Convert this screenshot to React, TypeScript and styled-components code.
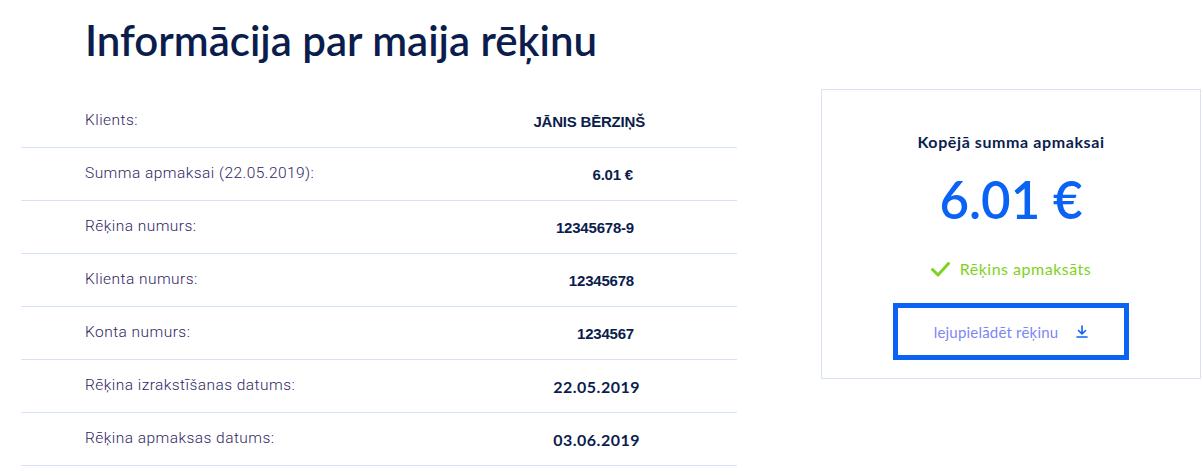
import styled, { createGlobalStyle } from 'styled-components'

const GlobalStyle = createGlobalStyle`
  body {
    margin: 0;
    background: #ffffff;
    font-family: 'Lato', 'Open Sans', sans-serif;
  }
`

const colors = {
  navy: '#0b1d4d',
  label: '#2f2563',
  line: '#d6e2f8',
  blue: '#0a63f5',
  green: '#7ed321',
  link: '#7d86f3',
}

interface Row {
  label: string
  value: string
  shift?: number
  wide?: boolean
}

const rows: Row[] = [
  { label: 'Klients:', value: 'JĀNIS BĒRZIŅŠ', shift: -11 },
  { label: 'Summa apmaksai (22.05.2019):', value: '6.01 €', shift: 1 },
  { label: 'Rēķina numurs:', value: '12345678-9' },
  { label: 'Klienta numurs:', value: '12345678' },
  { label: 'Konta numurs:', value: '1234567' },
  { label: 'Rēķina izrakstīšanas datums:', value: '22.05.2019', shift: -6, wide: true },
  { label: 'Rēķina apmaksas datums:', value: '03.06.2019', shift: -6, wide: true },
]

function App() {
  return (
    <>
      <GlobalStyle />
      <Page>
        <Left>
          <Title>Informācija par maija rēķinu</Title>
          <Table>
            {rows.map((row) => (
              <TableRow key={row.label}>
                <Label>{row.label}</Label>
                <Value $shift={row.shift ?? 0} $wide={!!row.wide}>
                  {row.value}
                </Value>
              </TableRow>
            ))}
          </Table>
        </Left>
        <Card>
          <CardTitle>Kopējā summa apmaksai</CardTitle>
          <Amount>6.01 €</Amount>
          <Status>
            <svg width="19" height="15" viewBox="0 0 19 15" fill="none">
              <path d="M1.5 7.5 L7 13 L17.5 1.5" stroke={colors.green} strokeWidth="3" strokeLinecap="round" strokeLinejoin="round" />
            </svg>
            Rēķins apmaksāts
          </Status>
          <DownloadButton>
            lejupielādēt rēķinu
            <svg width="12" height="13" viewBox="0 0 12 13" fill="none">
              <path d="M6 1 V9 M2.5 5.5 L6 9 L9.5 5.5 M1 12 H11" stroke={colors.blue} strokeWidth="1.6" strokeLinecap="round" strokeLinejoin="round" />
            </svg>
          </DownloadButton>
        </Card>
      </Page>
    </>
  )
}

const Page = styled.div`
  display: grid;
  grid-template-columns: 716px 380px;
  column-gap: 84px;
  padding-left: 21px;
  align-items: start;
`

const Left = styled.div`
  display: flex;
  flex-direction: column;
`

const Title = styled.h1`
  margin: 0;
  padding: 14px 0 0 64px;
  height: 80px;
  box-sizing: border-box;
  font-family: 'Lato', sans-serif;
  font-weight: 600;
  font-size: 42px;
  line-height: 52px;
  color: ${colors.navy};
`

const Table = styled.div`
  display: flex;
  flex-direction: column;
  margin-top: 15px;
`

const TableRow = styled.div`
  display: flex;
  align-items: center;
  justify-content: space-between;
  height: 53px;
  box-sizing: border-box;
  padding: 0 103px 0 64px;
  border-bottom: 1px solid ${colors.line};
`

const Label = styled.span`
  margin-top: -3px;
  font-family: 'Roboto', sans-serif;
  font-weight: 300;
  font-size: 15.5px;
  letter-spacing: 0.45px;
  color: ${colors.label};
`

const Value = styled.span<{ $shift: number; $wide: boolean }>`
  margin-right: ${({ $shift }) => $shift}px;
  font-family: ${({ $wide }) => ($wide ? "'Lato', sans-serif" : "'Liberation Sans', Arial, sans-serif")};
  font-weight: 700;
  font-size: ${({ $wide }) => ($wide ? '16px' : '15px')};
  letter-spacing: ${({ $wide }) => ($wide ? '0.5px' : '-0.2px')};
  color: ${colors.navy};
`

const Card = styled.div`
  margin-top: 89px;
  height: 290px;
  box-sizing: border-box;
  border: 1px solid ${colors.line};
  display: flex;
  flex-direction: column;
  align-items: center;
  padding-top: 42px;
`

const CardTitle = styled.div`
  font-family: 'Lato', sans-serif;
  font-weight: 700;
  font-size: 16px;
  letter-spacing: 0.6px;
  line-height: 20px;
  color: ${colors.navy};
`

const Amount = styled.div`
  margin-top: 18px;
  font-family: 'Lato', sans-serif;
  font-weight: 600;
  font-size: 51px;
  line-height: 60px;
  color: ${colors.blue};
`

const Status = styled.div`
  margin-top: 29px;
  display: flex;
  align-items: center;
  gap: 10px;
  font-family: 'Lato', sans-serif;
  font-size: 16px;
  letter-spacing: 0.5px;
  line-height: 20px;
  color: ${colors.green};
`

const DownloadButton = styled.div`
  margin-top: 24px;
  width: 236px;
  height: 57px;
  box-sizing: border-box;
  border: 5px solid ${colors.blue};
  display: flex;
  align-items: center;
  justify-content: center;
  gap: 18px;
  font-family: 'Lato', sans-serif;
  font-size: 15px;
  letter-spacing: 0.2px;
  color: ${colors.link};
  cursor: pointer;
`

export default App
